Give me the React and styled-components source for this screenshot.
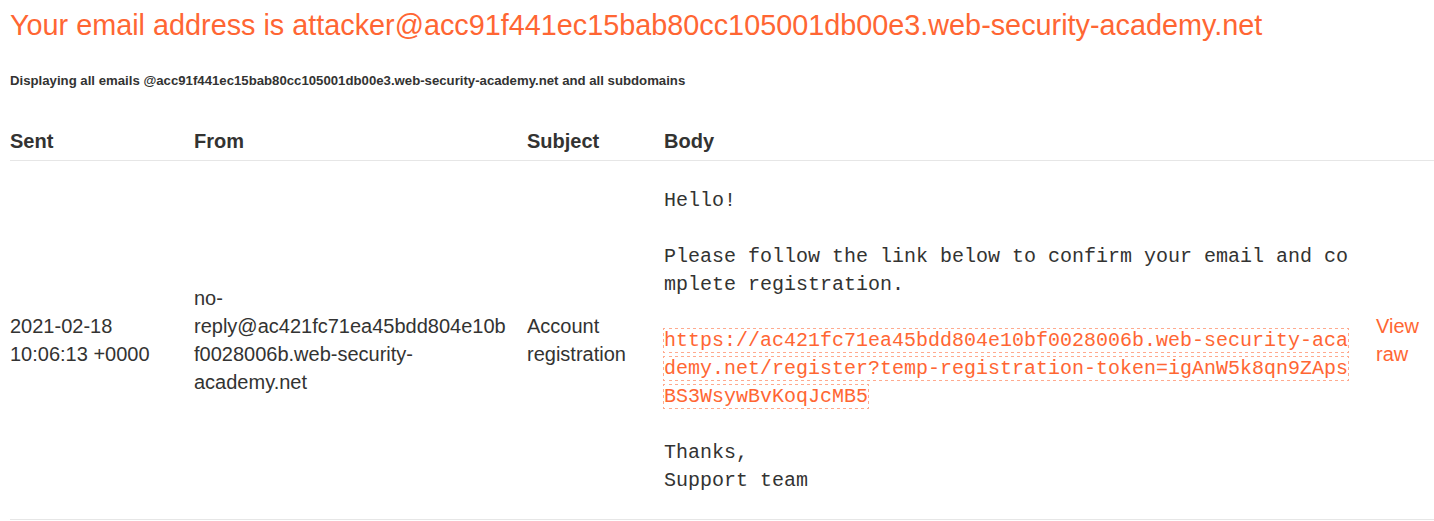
import React from "react";
import styled, { createGlobalStyle } from "styled-components";

const Global = createGlobalStyle`
  html, body { margin: 0; padding: 0; background: #fff; }
  body { font-family: "Liberation Sans", Arial, sans-serif; color: #333332; }
`;

const Page = styled.div`
  padding: 0 0 0 10px;
`;

const Title = styled.h1`
  margin: 9px 0 0;
  font-size: 28.8px;
  line-height: 32px;
  font-weight: normal;
  color: #ff6633;
`;

const Subtitle = styled.h4`
  margin: 32px 0 0;
  font-size: 13.2px;
  line-height: 16px;
  font-weight: bold;
  color: #333332;
`;

const Table = styled.div`
  margin-top: 40px;
  display: grid;
  grid-template-columns: 184px 333px 137px 712px 1fr;
`;

const HeadCell = styled.div`
  font-size: 20px;
  line-height: 24px;
  font-weight: bold;
  padding-bottom: 7px;
  border-bottom: 1px solid #e6e6e6;
`;

const Cell = styled.div`
  display: flex;
  align-items: center;
  font-size: 20px;
  line-height: 28px;
  padding-right: ${(p) => p.$pr || 0}px;
  border-bottom: 1px solid #e6e6e6;
  overflow-wrap: anywhere;
`;

const BodyCell = styled.div`
  padding: 26px 22px 24px 0;
  border-bottom: 1px solid #e6e6e6;
`;

const Pre = styled.div`
  font-family: "Liberation Mono", "Courier New", monospace;
  font-size: 20px;
  line-height: 28px;
  white-space: pre-wrap;
  word-break: break-all;
  color: #333332;
`;

const Link = styled.a`
  color: #ff6633;
  text-decoration: none;
  outline: 1px dotted rgba(255, 102, 51, 0.55);
`;

const RawLink = styled.a`
  color: #ff6633;
  text-decoration: none;
`;

export default function App() {
  const url =
    "https://ac421fc71ea45bdd804e10bf0028006b.web-security-academy.net/register?temp-registration-token=igAnW5k8qn9ZApsBS3WsywBvKoqJcMB5";
  return (
    <>
      <Global />
      <Page>
        <Title>Your email address is attacker@acc91f441ec15bab80cc105001db00e3.web-security-academy.net</Title>
        <Subtitle>Displaying all emails @acc91f441ec15bab80cc105001db00e3.web-security-academy.net and all subdomains</Subtitle>
        <Table>
          <HeadCell>Sent</HeadCell>
          <HeadCell>From</HeadCell>
          <HeadCell>Subject</HeadCell>
          <HeadCell>Body</HeadCell>
          <HeadCell />
          <Cell $pr={16}>2021-02-18 10:06:13 +0000</Cell>
          <Cell $pr={16}>no-reply@ac421fc71ea45bdd804e10bf0028006b.web-security-academy.net</Cell>
          <Cell $pr={16}>Account registration</Cell>
          <BodyCell>
            <Pre>
              {"Hello!\n\nPlease follow the link below to confirm your email and complete registration.\n\n"}
              <Link href="#">{url}</Link>
              {"\n\nThanks,\nSupport team"}
            </Pre>
          </BodyCell>
          <Cell>
            <RawLink href="#">View raw</RawLink>
          </Cell>
        </Table>
      </Page>
    </>
  );
}
